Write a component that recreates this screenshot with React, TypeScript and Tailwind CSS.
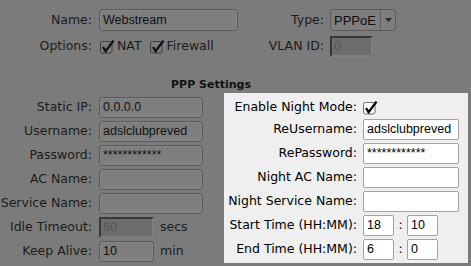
import React from "react";

function Check({ dim }: { dim?: boolean }) {
  return (
    <svg width="15" height="14" viewBox="0 0 15 14" className="shrink-0">
      <rect
        x="0.5"
        y="1.5"
        width="11.5"
        height="11.5"
        rx="2"
        fill={dim ? "#7c7c7c" : "#ffffff"}
        stroke={dim ? "#3e3e3e" : "#6a6a6a"}
      />
      <path d="M3 7 L5.6 11.2 L13.5 0.6" fill="none" stroke={dim ? "#111" : "#000"} strokeWidth="2.3" />
    </svg>
  );
}

// input text is a narrower face than the labels
const field = "font-['Liberation_Sans',sans-serif] text-[12.5px]";
const dimInput = `${field} h-[21px] bg-[#7e7e7e] border border-[#5b5b5b] rounded-[3px] shadow-[inset_0_0_0_1px_#858585] px-[3px] flex items-center text-[#111111]`;
const offInput = `${field} h-[21px] bg-[#6d6d6d] border-[2px] border-t-[#383838] border-l-[#383838] border-b-[#7e7e7e] border-r-[#7e7e7e] px-[2px] flex items-center text-[#555555]`;
const liteInput = `${field} h-[21px] bg-white border border-[#a2a2a2] rounded-[2px] px-[3px] flex items-center text-black`;

const leftRows: { label: string; value: string; w?: string; off?: boolean; unit?: string }[] = [
  { label: "Static IP:", value: "0.0.0.0" },
  { label: "Username:", value: "adslclubpreved" },
  { label: "Password:", value: "************" },
  { label: "AC Name:", value: "" },
  { label: "Service Name:", value: "" },
  { label: "Idle Timeout:", value: "60", w: "w-[55px]", off: true, unit: "secs" },
  { label: "Keep Alive:", value: "10", w: "w-[55px]", unit: "min" },
];

const rightRows = [
  { label: "ReUsername:", value: "adslclubpreved" },
  { label: "RePassword:", value: "************" },
  { label: "Night AC Name:", value: "" },
  { label: "Night Service Name:", value: "" },
];

const timeRows = [
  { label: "Start Time (HH:MM):", h: "18", m: "10" },
  { label: "End Time (HH:MM):", h: "6", m: "0" },
];

export default function App() {
  return (
    <div className="w-[471px] h-[266px] overflow-hidden bg-[#7b7b7b] text-[#1b1b1b] text-[12.5px] leading-none font-['DejaVu_Sans',sans-serif]">
      <div className="flex pt-[9px]">
        <div className="w-[240px]">
          <div className="flex items-center h-[22px]">
            <div className="w-[92px] text-right">Name:</div>
            <div className={`${dimInput} ml-[7px] w-[139px] h-[22px]`}>Webstream</div>
          </div>
          <div className="flex items-center h-[21px] mt-[5px]">
            <div className="w-[92px] text-right">Options:</div>
            <div className="ml-[8px] flex items-center">
              <Check dim />
              <span className="ml-[2px]">NAT</span>
              <span className="ml-[8px]">
                <Check dim />
              </span>
              <span className="ml-[2px]">Firewall</span>
            </div>
          </div>
        </div>
        <div>
          <div className="flex items-center h-[22px]">
            <div className="w-[84px] text-right">Type:</div>
            <div className="ml-[6px] w-[66px] h-[22px] bg-[#7e7e7e] border border-[#5b5b5b] rounded-[3px] flex items-stretch">
              <div className={`${field} text-[13px] flex-1 flex items-center pl-[3px] text-[#0e0e0e]`}>PPPoE</div>
              <div className="w-[15px] border-l border-[#5f5f5f] flex items-center justify-center">
                <svg width="7" height="4" viewBox="0 0 7 4">
                  <path d="M0 0 H7 L3.5 4 Z" fill="#2a2a2a" />
                </svg>
              </div>
            </div>
          </div>
          <div className="flex items-center h-[21px] mt-[5px]">
            <div className="w-[84px] text-right">VLAN ID:</div>
            <div className={`${offInput} ml-[6px] w-[43px]`}>0</div>
          </div>
        </div>
      </div>

      <div className="w-[422px] mt-[22px] h-[14px] text-center text-[11px] font-bold text-[#111]">
        PPP Settings
      </div>

      <div className="flex">
        <div className="w-[224px] pt-[4px]">
          {leftRows.map((r) => (
            <div key={r.label} className="flex items-center h-[21px] mb-[3px]">
              <div className="w-[92px] text-right whitespace-nowrap">{r.label}</div>
              <div className={`${r.off ? offInput : dimInput} ml-[7px] ${r.w ?? "w-[104px]"}`}>{r.value}</div>
              {r.unit && <span className="ml-[6px]">{r.unit}</span>}
            </div>
          ))}
        </div>

        <div className="w-[244px] h-[170px] bg-[#efefef] pt-[4px] text-black">
          <div className="flex items-center h-[21px] mb-[1px]">
            <div className="w-[133px] text-right">Enable Night Mode:</div>
            <div className="ml-[6px] pt-[1px]">
              <Check />
            </div>
          </div>
          {rightRows.map((r) => (
            <div key={r.label} className="flex items-center h-[21px] mb-[3px]">
              <div className="w-[133px] text-right whitespace-nowrap">{r.label}</div>
              <div className={`${liteInput} ml-[6px] w-[96px]`}>{r.value}</div>
            </div>
          ))}
          {timeRows.map((r) => (
            <div key={r.label} className="flex items-center h-[21px] mb-[3px]">
              <div className="w-[133px] text-right whitespace-nowrap">{r.label}</div>
              <div className={`${liteInput} ml-[6px] w-[31px]`}>{r.h}</div>
              <span className="w-[13px] text-center">:</span>
              <div className={`${liteInput} w-[31px]`}>{r.m}</div>
            </div>
          ))}
        </div>
      </div>
    </div>
  );
}
